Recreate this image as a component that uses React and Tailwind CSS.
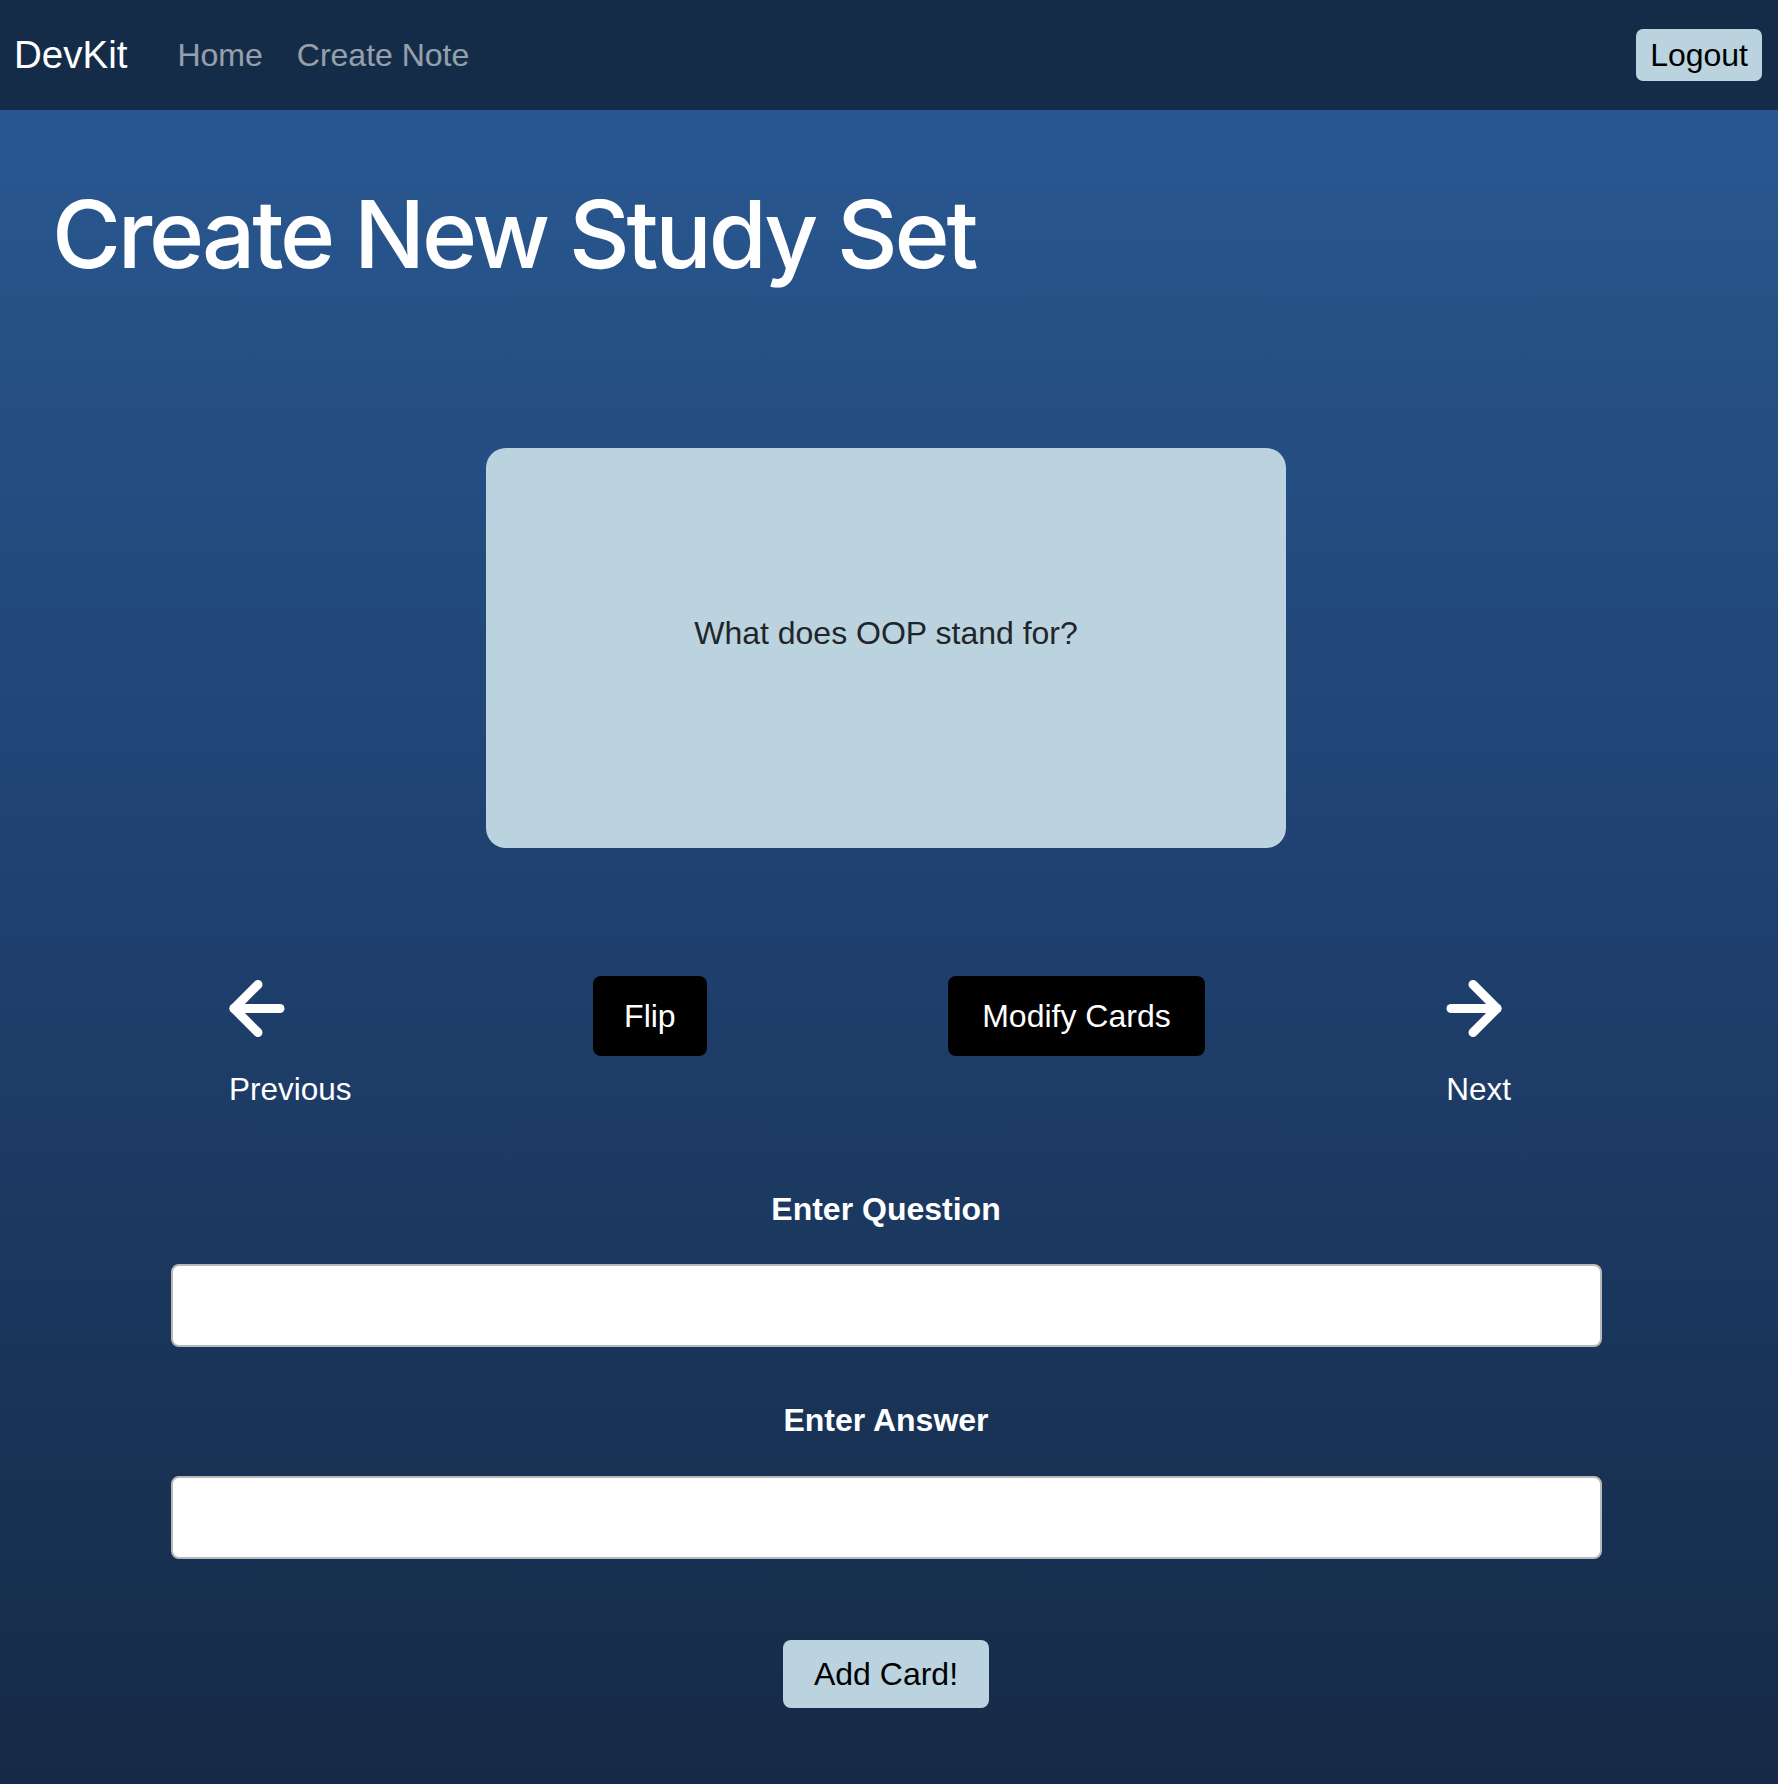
import { useState } from 'react';

function Arrow({ dir = 'left' }) {
  const flip = dir === 'right';
  return (
    <svg
      width="56"
      height="57"
      viewBox="0 0 56 57"
      fill="none"
      stroke="white"
      strokeWidth="9"
      strokeLinecap="round"
      strokeLinejoin="round"
      className="block"
      style={flip ? { transform: 'scaleX(-1)' } : undefined}
    >
      <path d="M29 4.5 5 28.5l24 24" />
      <path d="M5 28.5h46" />
    </svg>
  );
}

function NavArrow({ dir, label }) {
  return (
    <button className="flex flex-col items-start text-white">
      <span className="mt-[4px]">
        <Arrow dir={dir} />
      </span>
      <span className="mt-[28px] text-[31.5px] leading-[48px]">{label}</span>
    </button>
  );
}

export default function App() {
  const [question, setQuestion] = useState('');
  const [answer, setAnswer] = useState('');

  return (
    <div className="min-h-screen flex flex-col bg-gradient-to-b from-[#2a5b95] via-[#1f4170] to-[#152a46] font-['Liberation_Sans',Arial,sans-serif]">
      <nav className="h-[110px] bg-[#142c48] flex items-center justify-between pl-[14px] pr-[16px]">
        <div className="flex items-center">
          <span className="text-white text-[38.5px] leading-none">DevKit</span>
          <a className="ml-[50px] text-white/55 text-[32px] leading-none">Home</a>
          <a className="ml-[34px] text-white/55 text-[32px] leading-none">Create Note</a>
        </div>
        <button className="bg-[#bad3df] text-black rounded-[7px] px-[14px] h-[52px] text-[32px] leading-none">
          Logout
        </button>
      </nav>

      <main className="flex-1 pr-[6px] pb-[76px]">
        <h1 className="pt-[68px] pl-[52px] text-white text-[94px] leading-[112px] font-medium tracking-[-0.034em] font-['Inter',sans-serif]">
          Create New Study Set
        </h1>

        <div className="mt-[158px] mx-auto w-[800px] h-[400px] rounded-[20px] bg-[#bad3df] flex items-center justify-center">
          <p className="text-[#212529] text-[32px] leading-[48px] -mt-[30px]">What does OOP stand for?</p>
        </div>

        <div className="mt-[128px] pl-[229px] pr-[261px] flex items-start justify-between">
          <NavArrow dir="left" label="Previous" />
          <button className="bg-black text-white rounded-[8px] px-[31px] py-[16px] text-[32px] leading-[48px]">
            Flip
          </button>
          <button className="bg-black text-white rounded-[8px] px-[34px] py-[16px] text-[32px] leading-[48px]">
            Modify Cards
          </button>
          <NavArrow dir="right" label="Next" />
        </div>

        <div className="mt-[72px] mx-auto w-[1431px] flex flex-col items-center">
          <label className="text-white font-bold text-[32px] leading-[48px]">Enter Question</label>
          <input
            value={question}
            onChange={(e) => setQuestion(e.target.value)}
            className="mt-[31px] w-full h-[83px] bg-white border-2 border-[#b9b9b9] rounded-[8px] px-4 text-[32px] outline-none"
          />
          <label className="mt-[49px] text-white font-bold text-[32px] leading-[48px]">Enter Answer</label>
          <input
            value={answer}
            onChange={(e) => setAnswer(e.target.value)}
            className="mt-[32px] w-full h-[83px] bg-white border-2 border-[#b9b9b9] rounded-[8px] px-4 text-[32px] outline-none"
          />
          <button className="mt-[81px] bg-[#bad3df] text-black rounded-[8px] px-[31px] py-[10px] text-[32px] leading-[48px]">
            Add Card!
          </button>
        </div>
      </main>
    </div>
  );
}
